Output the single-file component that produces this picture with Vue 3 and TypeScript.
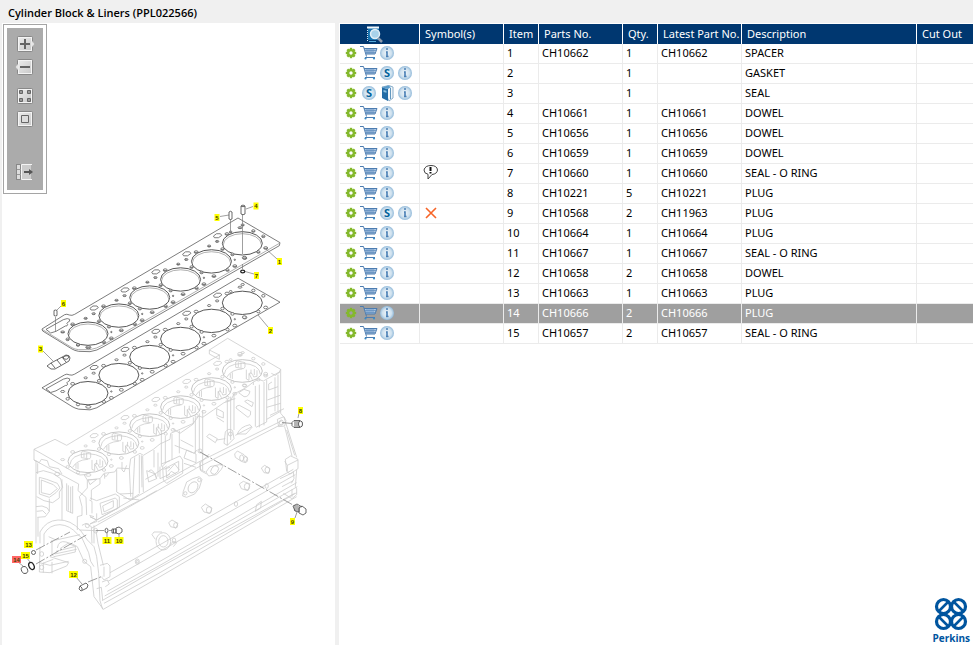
<script setup lang="ts">
import { ref } from 'vue'

type Action = 'gear' | 'cart' | 'info' | 'super' | 'book'
type Mark = '' | 'note' | 'cross'
interface Part {
  item: number
  no: string
  qty: number
  latest: string
  description: string
  actions: Action[]
  mark: Mark
}
interface Hole { x: number; y: number; rx: number; ry: number }
interface Callout { n: number; x: number; y: number; hot?: boolean }

const basic: Action[] = ['gear', 'cart', 'info']
const withSuper: Action[] = ['gear', 'cart', 'super', 'info']

function part(item: number, no: string, qty: number, description: string, latest = no, actions = basic, mark: Mark = ''): Part {
  return { item, no, qty, latest, description, actions, mark }
}

const parts: Part[] = [
  part(1, 'CH10662', 1, 'SPACER'),
  part(2, '', 1, 'GASKET', '', withSuper),
  part(3, '', 1, 'SEAL', '', ['gear', 'super', 'book', 'info']),
  part(4, 'CH10661', 1, 'DOWEL'),
  part(5, 'CH10656', 1, 'DOWEL'),
  part(6, 'CH10659', 1, 'DOWEL'),
  part(7, 'CH10660', 1, 'SEAL - O RING', 'CH10660', basic, 'note'),
  part(8, 'CH10221', 5, 'PLUG'),
  part(9, 'CH10568', 2, 'PLUG', 'CH11963', withSuper, 'cross'),
  part(10, 'CH10664', 1, 'PLUG'),
  part(11, 'CH10667', 1, 'SEAL - O RING'),
  part(12, 'CH10658', 2, 'DOWEL'),
  part(13, 'CH10663', 1, 'PLUG'),
  part(14, 'CH10666', 2, 'PLUG'),
  part(15, 'CH10657', 2, 'SEAL - O RING'),
]
const selected = ref(14)

const actionLabels: Record<Action, string> = {
  gear: 'Options', cart: 'Add to cart', info: 'Information', super: 'Supersession', book: 'Catalogue',
}
const tools = [
  { id: 'in', label: 'Zoom in' },
  { id: 'out', label: 'Zoom out' },
  { id: 'fit', label: 'Fit to window' },
  { id: 'actual', label: 'Actual size' },
  { id: 'panel', label: 'Toggle panel' },
]

/* Bores run along the engine axis; all gasket units are thirds of a pixel. */
const bores = [0, 1, 2, 3, 4, 5].map((i) => ({ x: 264 + i * 92.6, y: 416 - i * 54.2 }))
const between = [[-7, -46, 5, 3], [17, -60, 5, 3], [70, -5, 2, 2], [100, -10, 6, 4]]
const around = [[-46, -28, 6, 4], [33, -37, 5, 4], [63, -21, 5, 4], [48, 26, 5, 4], [70, 14, 6, 4]]
const front = [[-76, -5, 6, 3], [-61, 17, 5, 4], [-30, 34, 5, 4], [1, 41, 8, 4]]
const rear = [[1, -55, 5, 3], [-7, -47, 6, 3], [-35, -34, 4, 3], [6, 43, 6, 4]]
const holes: Hole[] = bores.flatMap((b, i) => {
  const set = [...around, ...(i < 5 ? between : rear), ...(i === 0 ? front : [])]
  return set.map(([x, y, rx, ry]) => ({ x: b.x + x, y: b.y + y, rx, ry }))
})
const ports = bores.slice(0, 5).map((b) => `M${b.x + 6} ${b.y - 76}l9 -7 12 0 4 5 -10 7 -12 0z`)
const plate =
  'M126 402 L194 359 Q200 356 208 360 Q216 363 224 358 L714 69 L840 143 L838 152 L312 454 Q290 468 270 470 L236 469 Q224 467 216 462 L128 408 Z'
const sheet =
  'M126 400 L194 361 Q200 357 208 361 Q216 364 224 359 L714 71 L840 143 L312 447 Q290 463 270 466 L236 464 Q224 461 216 456 Z'
const opening = 'M138 403 L190 374 Q204 368 209 373 Q211 380 203 382 Q198 384 203 389 Q202 394 196 393 L168 409 L152 414 Z'

const callouts: Callout[] = [
  { n: 4, x: 256, y: 206 }, { n: 5, x: 217, y: 217.5 }, { n: 1, x: 279.5, y: 261.5 },
  { n: 7, x: 256.5, y: 275.5 }, { n: 6, x: 63.5, y: 303.5 }, { n: 2, x: 270.5, y: 330.5 },
  { n: 3, x: 40.5, y: 349 }, { n: 8, x: 300.5, y: 410.5 }, { n: 9, x: 292.5, y: 521.5 },
  { n: 11, x: 107, y: 540.5 }, { n: 10, x: 119, y: 540.5 }, { n: 13, x: 28.5, y: 544.5 },
  { n: 15, x: 25.5, y: 555.5 }, { n: 14, x: 16.5, y: 559.5, hot: true }, { n: 12, x: 73.5, y: 574.5 },
]
const teeth = [0, 45, 90, 135, 180, 225, 270, 315]
</script>

<template>
  <main class="page">
    <h1 class="title">Cylinder Block &amp; Liners (PPL022566)</h1>
    <div class="panes">
      <section class="drawing" aria-label="Exploded view">
        <svg class="diagram" viewBox="2 23 333 622" preserveAspectRatio="xMinYMin meet">
          <!-- engine block -->
          <g class="block" transform="translate(0 400) scale(.33333)">
            <path d="M102 148L165 118 200 136 480 -32 660 -136 M102 148V180L118 188 M102 148L228 220Q240 228 252 224L272 218 M102 180L236 252" />
            <path d="M628 -150L683 -185 842 -92 838 -84 790 -57 775 -62 760 -54V-45 M628 -150V-138L658 -122V-135Z" />
            <path d="M252 224L262 240 300 236 312 220 344 216 352 204 388 206 392 176 420 160 430 166 460 148 480 132 510 118 512 100 540 88 580 70 596 48 608 52 640 30 672 8 692 2 702 -18 740 -38 760 -54" />
            <path d="M262 240V264L238 290 246 320 246 346 232 350 V390 M300 236V252L274 270V300 M236 252L234 272 258 292 260 345 M350 208V276 M388 206L392 290 M418 165V280 M424 166L426 262 M404 172L398 300" />
            <path d="M108 182V430 M113 190V222 M118 188L124 178 142 182 148 200 176 206 186 222 M108 218L130 212 158 220 182 236 188 262 178 276V294L158 308 132 302 110 290 M118 232L140 238 172 250 180 264 168 278 148 292 118 282Z M124 240L160 254 172 266 150 284 124 278Z" />
            <path d="M108 320L126 318 142 324 148 334 136 350 112 352 M110 334L128 332 138 342 M114 352V410 M148 296V334 M200 250V332L218 340V258 M205 256V332 M212 260V338 M186 238L186 360" />
            <path d="M120 430V396Q138 362 174 360 212 358 242 392L262 420 282 440 290 470 296 520 300 602 308 628 M132 438V402Q148 374 180 374 210 376 232 402L246 414 266 458 272 484 282 500 M120 440L118 516 150 518 200 498 206 488 150 470 M130 488V518 M156 486V520 M118 488L150 496 206 484 M128 490L160 478" />
            <path d="M146 410L168 420 240 404 M156 420V464L162 470 226 456V440 M164 462L230 448 M168 454L224 440 M172 444Q176 420 198 426T232 440L252 484 272 500 282 590 310 628 M180 446L204 430 228 440 M238 390L288 392 294 430 310 496 M246 376L258 370 274 380 276 430 M282 376V430 M270 372L292 364" />
            <ellipse cx="125" cy="462" rx="6" ry="7" /><ellipse cx="125" cy="502" rx="6" ry="7" /><ellipse cx="172" cy="222" rx="8" ry="5" /><ellipse cx="262" cy="377" rx="6" ry="6" /><ellipse cx="287" cy="392" rx="6" ry="7" /><ellipse cx="254" cy="484" rx="6" ry="6" />
            <path d="M270 294L290 302 346 282 358 290V322L290 360 270 350 M300 310L346 294 352 300V326L306 344Z M308 318L340 302 V322L312 336Z M270 350L290 360 290 340 M268 300L276 304 276 340 M268 346L282 350" />
            <path d="M300 496L322 490 330 498V530L312 540 304 530 M312 500V530 M330 518L480 434 880 208 M324 544L480 454 886 224 M306 546L322 540 328 552 316 560 M322 574L480 484 890 248 M314 588L480 496 892 260 M306 602L480 502 884 280 M312 610L480 518 890 278 M310 628L480 530 890 290 M290 566L304 562 308 600" />
            <path d="M270 372L480 250 600 184 846 62 M276 384L480 268 590 204 858 66 M294 366L440 290 M600 184L602 212 620 222" />
            <ellipse cx="490" cy="424" rx="14" ry="17" /><ellipse cx="490" cy="424" rx="22" ry="26" /><path d="M466 418L456 404 462 396 486 396 M508 436L520 424 530 428 520 440" />
            <ellipse cx="412" cy="485" rx="6" ry="8" /><ellipse cx="412" cy="485" rx="3" ry="4" />
            <path d="M436 238L462 224 500 198 M440 212L466 222 470 236 446 246 Z M446 214Q454 204 462 218L470 236 M484 192L510 182 M480 200V236L510 222 M490 208L510 202 M428 168L430 276 M438 290L470 272" />
            <path d="M350 276L390 300 418 282 M360 282L400 280 M370 294L418 300 M366 186V210L372 216 380 196 M264 240L290 238 270 254 Z M310 222L318 230 326 220 M314 222V236 M474 158L474 230 M462 150V202" />
          </g>
          <!-- rear and side of the block -->
          <g class="block" transform="translate(160 330) scale(.33333)">
            <path d="M362 118V250 M354 134V244 M345 142V244 M320 150V276 M312 156V286 M298 164V292 M286 168V290 M336 156L326 162V180L354 170 M322 210L360 196 M320 232L362 220 M320 268L362 244 M288 292L320 276 M334 130L346 136 360 126" />
            <path d="M202 208V346 M212 200V330 M222 190V300 M128 240V420 M118 250V368 M106 262V370 M196 214L226 206 M4 300V410 M16 318V400 M36 312V390 M58 302V370 M44 346L98 368 M62 330L100 350 M38 296L60 310 100 282V262" />
            <path d="M228 234L264 262Q274 258 272 244L238 226Q228 226 228 234Z M254 214L276 230 280 218 262 210Z M140 320L166 338 172 326 148 312Z M170 236L190 246V264L170 256Z M170 262L192 276 M236 188L252 200Q266 202 270 184L252 178Z M232 312Q240 290 270 284L276 292 258 312Z M226 316L276 290" />
            <path d="M196 306Q206 292 218 302L222 326 202 346 192 340Z M170 330L196 326 M148 372L120 400 V418L136 426 M100 370L112 360 M128 372L144 380" /><circle cx="211" cy="312" r="6" /><circle cx="120" cy="363" r="6" />
            <path d="M8 408L20 396 60 378 68 390V430L20 460 10 450Z M18 414L56 394V424L20 444Z M24 424L44 402 58 420 M20 440L34 424 48 432 M72 384L108 398V372L80 360Z M72 400L108 412" />
            <path d="M70 484L80 456 98 446 118 440 126 448 118 474 104 492 80 502 68 498Z" /><ellipse cx="99" cy="472" rx="13" ry="18" transform="rotate(35 99 472)" /><circle cx="76" cy="490" r="5" /><circle cx="118" cy="450" r="5" />
            <path d="M138 426L150 410 178 404 190 406 184 418 170 434 146 438Z" /><ellipse cx="164" cy="420" rx="10" ry="14" transform="rotate(35 164 420)" />
            <path d="M224 372L232 363 252 374 262 386 256 398 244 394 226 382Z M304 414L314 406 330 416 326 430 312 428Z M238 462L250 454 270 462 264 482 244 476Z M124 532L136 522 156 534 150 550 132 546Z M26 578L36 570 54 580 48 594 32 590Z M290 524L304 514 302 534 286 544Z" />
            <ellipse cx="245" cy="384" rx="6" ry="9" /><ellipse cx="257" cy="388" rx="6" ry="9" /><ellipse cx="322" cy="420" rx="7" ry="9" /><ellipse cx="261" cy="470" rx="8" ry="10" /><ellipse cx="147" cy="540" rx="8" ry="10" /><ellipse cx="47" cy="586" rx="6" ry="8" /><ellipse cx="320" cy="468" rx="5" ry="7" /><ellipse cx="228" cy="522" rx="5" ry="7" /><ellipse cx="42" cy="631" rx="5" ry="7" />
            <path d="M352 268L372 260 378 272 374 288 356 290Z M362 250L372 262 410 382 M374 290L396 378 M380 300L404 376 M376 388L392 378 414 388V416L390 432 380 424Z M374 394L382 406 414 390 M382 406V424 M400 424L402 446 394 460 M410 420L406 470 410 476V494L396 506 370 490 M360 446L398 428 M366 470L400 452 M396 478V500 M330 256L372 236" /><ellipse cx="364" cy="278" rx="6" ry="8" />
            <ellipse cx="240" cy="72" rx="7" ry="5" /><ellipse cx="317" cy="132" rx="6" ry="5" />
          </g>
          <!-- cylinder liners seen through the deck -->
          <g transform="translate(0 330.3) scale(.33333)" class="block">
            <g v-for="(b, i) in bores" :key="i" :transform="`translate(${b.x} ${b.y - 23})`">
              <ellipse class="rim" rx="60" ry="34" />
              <path d="M-54 10Q-52 -20 0 -23 52 -20 54 10 M-20 -27V-11L4 -7 8 -12V-25L-14 -30Z M-12 -26V-12 M-4 -25V-10 M-46 18Q-34 -4 0 -6 M12 -4V24L20 28V8Q28 0 34 18L44 16V-2 M20 8L30 26 M26 -4V10 M36 -6V12 M-30 4V24 M-36 8V22" />
            </g>
            <ellipse v-for="(h, i) in holes" :key="i" :cx="h.x" :cy="h.y - 23" :rx="h.rx" :ry="h.ry" />
            <path v-for="(p, i) in ports" :key="`p${i}`" :d="p" transform="translate(0 -23)" />
          </g>
          <!-- lower gasket -->
          <g class="gasket" transform="translate(0 254.5) scale(.33333)">
            <path :d="sheet" /><path :d="opening" />
            <ellipse v-for="(b, i) in bores" :key="i" class="bore" :cx="b.x" :cy="b.y" rx="60" ry="35" />
            <ellipse v-for="(h, i) in holes" :key="`h${i}`" :cx="h.x" :cy="h.y" :rx="h.rx" :ry="h.ry" />
            <path v-for="(p, i) in ports" :key="`p${i}`" :d="p" />
          </g>
          <!-- spacer plate -->
          <g class="gasket" transform="translate(0 195) scale(.33333)">
            <path :d="plate" /><path class="edge" d="M128 404L216 458Q224 463 236 464L270 464Q288 462 312 448L838 145" /><path :d="opening" />
            <g v-for="(b, i) in bores" :key="i"><ellipse class="bore" :cx="b.x" :cy="b.y" rx="60" ry="35" /><path class="edge" :d="`M${b.x - 57} ${b.y + 4}A57 33 0 0 1 ${b.x + 57} ${b.y + 4}`" /></g>
            <g v-for="(h, i) in holes" :key="`h${i}`"><ellipse :cx="h.x" :cy="h.y" :rx="h.rx" :ry="h.ry" /><path :d="`M${h.x - h.rx + 1} ${h.y + 1}h${2 * h.rx - 2}`" /></g>
            <path v-for="(p, i) in ports" :key="`p${i}`" :d="p" />
          </g>
          <!-- loose parts and leader lines -->
          <g class="leader">
            <path d="M242.500 214V254M230.500 219V232M242.500 264V269M246 209L253 206.500M220 216.500L229 215M266 249L277 259M245 271.500L254 274M258 315L268 327M55.500 317V332M57 310L61 306M43 351L53 361M298 418L299 413M282 422.500L292 423.500M295 518L297 512M96 530.500H104M109 530.500H112M107 532V537M119 534V537M26 557L30 562M18 562L23 566M76 577L82 584" />
            <path stroke-dasharray="10 2 2 2" d="M200 452L293 505M36 550L70 532M36 564L88 534M88 582L103 576" />
          </g>
          <g class="loose">
            <path d="M241 206v8q2 1.500 4 0v-8q-2 -2 -4 0q2 1.500 4 0M229 212v7q1.500 1 3 0v-7q-1.500 -1.500 -3 0M54 310.500v5q1.500 1 3 0v-5q-1.500 -1 -3 0" />
            <ellipse cx="242.700" cy="271.500" rx="2" ry="1.300" class="ring" />
            <path d="M47 366L51 363 66 355Q70 355 70 358L69 361 55 369 51 369ZM51 363L55 368M57 360L61 365M62 357L66 362M63 358Q66 354 69 357Q67 361 63 358" />
            <path d="M294 420.500h6l2 2v3l-2 2h-6l-2 -2v-3zM295 421v6M297 421v6M299 421v6" /><ellipse cx="300.500" cy="424" rx="2" ry="3" />
            <path d="M293 506L297 504 302 507M293 506L295 511 299 512M295 505V511M297 505V511M299 506V512M299 508L302 506 306 509 306 513 303 515 299 513Z" />
            <ellipse cx="106.500" cy="530.500" rx="1.500" ry="2.200" /><path d="M112 529h4v4h-4zM113.500 529v4M116 528l3 -1 3 2v3l-3 2 -3 -1z" />
            <ellipse cx="33.500" cy="552.500" rx="2" ry="2" /><ellipse cx="31.500" cy="566" rx="2.500" ry="3.700" transform="rotate(-25 31.500 566)" class="ring" /><ellipse cx="24.500" cy="570" rx="3" ry="3.700" transform="rotate(-25 24.500 570)" />
            <path d="M80 586L86 583 88 585 87 588 81 591 79 589ZM80 586L82 588V590" />
          </g>
          <g v-for="c in callouts" :key="c.n" class="callout" :class="{ hot: c.hot }">
            <rect :x="c.x - (c.n > 9 ? 4.500 : 2.500)" :y="c.y - 3.500" :width="c.n > 9 ? 9 : 5" height="7" />
            <text :x="c.x" :y="c.y + 2">{{ c.n }}</text>
          </g>
        </svg>

        <div class="tools" role="toolbar" aria-label="Drawing tools">
          <button v-for="t in tools" :key="t.id" type="button" class="tool" :class="t.id" :aria-label="t.label">
            <svg viewBox="0 0 20 18" width="20" height="18">
              <defs><linearGradient id="key" x1="0" y1="0" x2="1" y2="1"><stop offset="0" stop-color="#ececec" /><stop offset="1" stop-color="#c9c9c9" /></linearGradient></defs>
              <template v-if="t.id !== 'panel'">
                <rect x="2.500" y="1.500" width="15" height="15" rx="1" fill="#d9d9d9" stroke="#888" />
                <rect x="3.500" y="2.500" width="13" height="13" fill="url(#key)" stroke="#f4f4f4" />
              </template>
              <g v-if="t.id === 'in'"><path d="M17 6.500l2 2.500-2 2.500z" fill="#eee" stroke="#ddd" /><path d="M5 9h10M10 4v10" stroke="#666" stroke-width="2" /></g>
              <g v-else-if="t.id === 'out'"><path d="M3 6.500L1 9l2 2.500z" fill="#eee" stroke="#ddd" /><path d="M5 9h10" stroke="#666" stroke-width="2" /></g>
              <g v-else-if="t.id === 'fit'" fill="#999" stroke="#666"><path d="M4.500 3.500h3v3h-3zM12.500 3.500h3v3h-3zM4.500 11.500h3v3h-3zM12.500 11.500h3v3h-3z" /></g>
              <path v-else-if="t.id === 'actual'" d="M6.500 5.500h7v7h-7z" fill="#ddd" stroke="#666" />
              <g v-else><rect x="1.500" y="1.500" width="4" height="15" fill="#ddd" stroke="#888" /><path d="M2 6.500h4M2 11.500h4" stroke="#999" /><rect x="7" y="2" width="9" height="14" fill="#ccc" /><path d="M17 1.500H6.500V16.500H17" fill="none" stroke="#f4f4f4" /><path d="M9 9h6" stroke="#555" stroke-width="2" /><path d="M14 6l4 3-4 3z" fill="#555" /></g>
            </svg>
          </button>
        </div>
      </section>

      <section class="list" aria-label="Parts list">
        <table>
          <colgroup><col class="c-act" /><col class="c-sym" /><col class="c-item" /><col class="c-no" /><col class="c-item" /><col class="c-no" /><col class="c-desc" /><col /></colgroup>
          <thead>
            <tr>
              <th class="find">
                <svg viewBox="0 0 18 17" width="18" height="17" aria-label="Search">
                  <path d="M2 2h11v12H2z" fill="#1673b1" /><path d="M1 1.500h12" stroke="#eef6fb" stroke-width="2" /><path d="M1.500 4v11" stroke="#d5e8f4" stroke-dasharray="1 1" />
                  <path d="M3 15.500h7" stroke="#56a9d8" /><circle cx="9" cy="8" r="4.500" fill="#a9d2ea" stroke="#e2eef6" stroke-width="1.500" /><path d="M12 12l4 4" stroke="#8c9bad" stroke-width="2.500" />
                </svg>
              </th>
              <th>Symbol(s)</th><th>Item</th><th>Parts No.</th><th>Qty.</th><th>Latest Part No.</th><th>Description</th><th>Cut Out</th>
            </tr>
          </thead>
          <tbody>
            <tr v-for="p in parts" :key="p.item" :class="{ selected: p.item === selected }" @click="selected = p.item">
              <td class="actions">
                <div class="icons">
                  <button v-for="a in p.actions" :key="a" type="button" :aria-label="actionLabels[a]">
                    <svg viewBox="0 0 18 18" width="18" height="18">
                      <g v-if="a === 'gear'" fill="#84b82c">
                        <rect v-for="d in teeth" :key="d" x="7.800" y="3.800" width="2.400" height="3" :transform="`rotate(${d} 9 9)`" />
                        <circle cx="9" cy="9" r="2.900" fill="none" stroke="#84b82c" stroke-width="2.400" />
                      </g>
                      <g v-else-if="a === 'cart'">
                        <path d="M4.500 5h11.500l-1.500 5H6z" fill="#a9c5e2" /><path d="M0 2.500h3.500L6.500 12.500M4 4.500H17L15 10H6M5 13.500h10" fill="none" stroke="#4c7cb0" />
                        <path d="M7 5v5M9 5v5M11 5v5M13 5v5M5 6.500h11M5.500 8.500h10" stroke="#6590c0" stroke-width=".8" /><circle cx="5.500" cy="14.500" r="1.100" fill="#3c8cc4" /><circle cx="14" cy="14.500" r="1.100" fill="#3c8cc4" />
                      </g>
                      <g v-else-if="a === 'book'">
                        <path d="M4 3l7-1.500 4 1.500v11l-4 3z" fill="#f2f7fa" stroke="#6e9bbd" stroke-width=".8" /><path d="M4 3.500l6 1.500V17L4 14z" fill="#236ca5" /><path d="M4 3.500l6-2L13 3l-3 2z" fill="#5b9ccb" /><path d="M5.500 6l3 .7v2l-3-.7z" fill="#8dc1e0" /><path d="M12.500 4v11" stroke="#3d7fb0" stroke-width=".8" />
                      </g>
                      <g v-else>
                        <defs><radialGradient id="disc"><stop offset="0" stop-color="#eef5fa" /><stop offset=".65" stop-color="#cfe1ee" /><stop offset="1" stop-color="#92bada" /></radialGradient></defs>
                        <circle cx="9" cy="9" r="7" fill="url(#disc)" />
                        <path v-if="a === 'info'" d="M8 5h2M8 8h1v4.500M8 12.500h2.500" fill="none" stroke="#4a7fb5" stroke-width="1.600" />
                        <text v-else class="ess" x="9" y="13">S</text>
                      </g>
                    </svg>
                  </button>
                </div>
              </td>
              <td class="mark">
                <svg v-if="p.mark === 'note'" viewBox="0 0 18 18" width="18" height="18"><path d="M9 1.500q6 0 6.500 4.500-.5 4-5.500 4.500L6 15V10.300Q2 9.500 2 6 3 1.500 9 1.500z" fill="#fff" stroke="#444" /><path d="M8.500 3v4M8.500 8v1.500" stroke="#111" stroke-width="2" /></svg>
                <svg v-else-if="p.mark === 'cross'" viewBox="0 0 18 18" width="18" height="18"><path d="M4 4l10 10M14 4L4 14" stroke="#f76427" stroke-width="1.600" /></svg>
              </td>
              <td>{{ p.item }}</td><td>{{ p.no }}</td><td>{{ p.qty }}</td><td>{{ p.latest }}</td><td>{{ p.description }}</td><td></td>
            </tr>
          </tbody>
        </table>
        <footer class="brand">
          <svg viewBox="0 0 34 34" width="34" height="34" aria-hidden="true">
            <g fill="none" stroke="#00559f" stroke-width="3.200">
              <circle cx="9.500" cy="9.500" r="7" /><circle cx="24.500" cy="9.500" r="7" /><circle cx="9.500" cy="24.500" r="7" /><circle cx="24.500" cy="24.500" r="7" />
              <path d="M5 14L14 5M20 5l9 9M5 20l9 9M20 29l9-9" stroke-width="2.600" />
            </g>
          </svg>
          <span>Perkins</span>
        </footer>
      </section>
    </div>
  </main>
</template>

<style>
body { background: #f0f0f0; }
</style>

<style scoped>
* { box-sizing: border-box; }
.page { display: flex; flex-direction: column; min-height: 100vh; background: #f0f0f0; color: #000; font-family: "Noto Sans", "Open Sans", sans-serif; font-size: 11px; }
.title { margin: 0; padding: 3px 8px 0; height: 23px; font-family: "Open Sans", sans-serif; line-height: 20px; font-size: 11px; font-weight: 600; }
.panes { flex: 1; display: flex; gap: 4px; padding-left: 2px; }
.drawing { position: relative; flex: 0 0 333px; background: #fff; }
.diagram { display: block; width: 100%; }
.tools { position: absolute; left: 1px; top: 1px; display: flex; flex-direction: column; align-items: center; width: 44px; padding: 7px; border: 1px solid #a5a5a5; background: #ababab; box-shadow: inset 0 0 0 3px #fff; }
.tool { display: block; height: 18px; margin: 0 0 5px; padding: 0; border: 0; background: none; }
.tool svg, .icons svg, .find svg, .mark svg { display: block; }
.tool.out { margin-bottom: 11px; }
.tool.in { margin-top: 3px; }
.tool.actual { margin-bottom: 35px; }
.list { flex: 1; min-width: 0; display: flex; flex-direction: column; padding: 1px 0 0 1px; background: #fff; }
table { width: 100%; table-layout: fixed; border-collapse: separate; border-spacing: 0; }
.c-act { width: 80px; }
.c-sym, .c-no { width: 84px; }
.c-item { width: 35px; }
.c-desc { width: 175px; }
th { height: 20px; padding: 0 0 0 5px; border-right: 1px solid #fff; background: #003770; color: #fff; font-weight: 400; line-height: 20px; text-align: left; white-space: nowrap; }
td { height: 20px; padding: 0 3px; border-right: 1px solid #ebebeb; border-bottom: 1px solid #ebebeb; line-height: 18px; white-space: nowrap; vertical-align: top; }
th:last-child, td:last-child { border-right: 0; }
th.find { padding-left: 26px; }
td.actions { padding: 0 0 0 2px; }
td.mark { padding: 0 2px; }
.icons { display: flex; height: 18px; }
.icons button { width: 18px; height: 18px; padding: 0; border: 0; background: none; }
.selected td { background: #9f9f9f; color: #fff; }
.ess { font-family: "Open Sans", sans-serif; font-size: 11px; font-weight: 700; fill: #00629c; text-anchor: middle; }
.brand { display: flex; flex-direction: column; align-items: center; align-self: flex-end; margin-top: auto; padding-right: 3px; color: #00559f; font-family: "Open Sans", sans-serif; font-size: 10px; font-weight: 700; line-height: 14px; }
.block { fill: none; stroke: #cbcbcb; stroke-width: 2.4; }
.block .rim { stroke: #b8b8b8; }
.gasket { fill: #fff; stroke: #5c5c5c; stroke-width: 2.4; }
.gasket .bore { stroke: #4a4a4a; stroke-width: 2.8; }
.gasket .edge { fill: none; stroke: #888; stroke-width: 2; }
.leader { fill: none; stroke: #777; stroke-width: .7; }
.loose { fill: #fff; stroke: #444; stroke-width: .8; }
.ring { stroke: #222; stroke-width: 1.3; }
.callout rect { fill: #ff0; }
.callout.hot rect { fill: #f66; }
.callout text { font-family: "Liberation Sans", sans-serif; font-size: 6px; font-weight: 700; fill: #444400; text-anchor: middle; }
</style>
